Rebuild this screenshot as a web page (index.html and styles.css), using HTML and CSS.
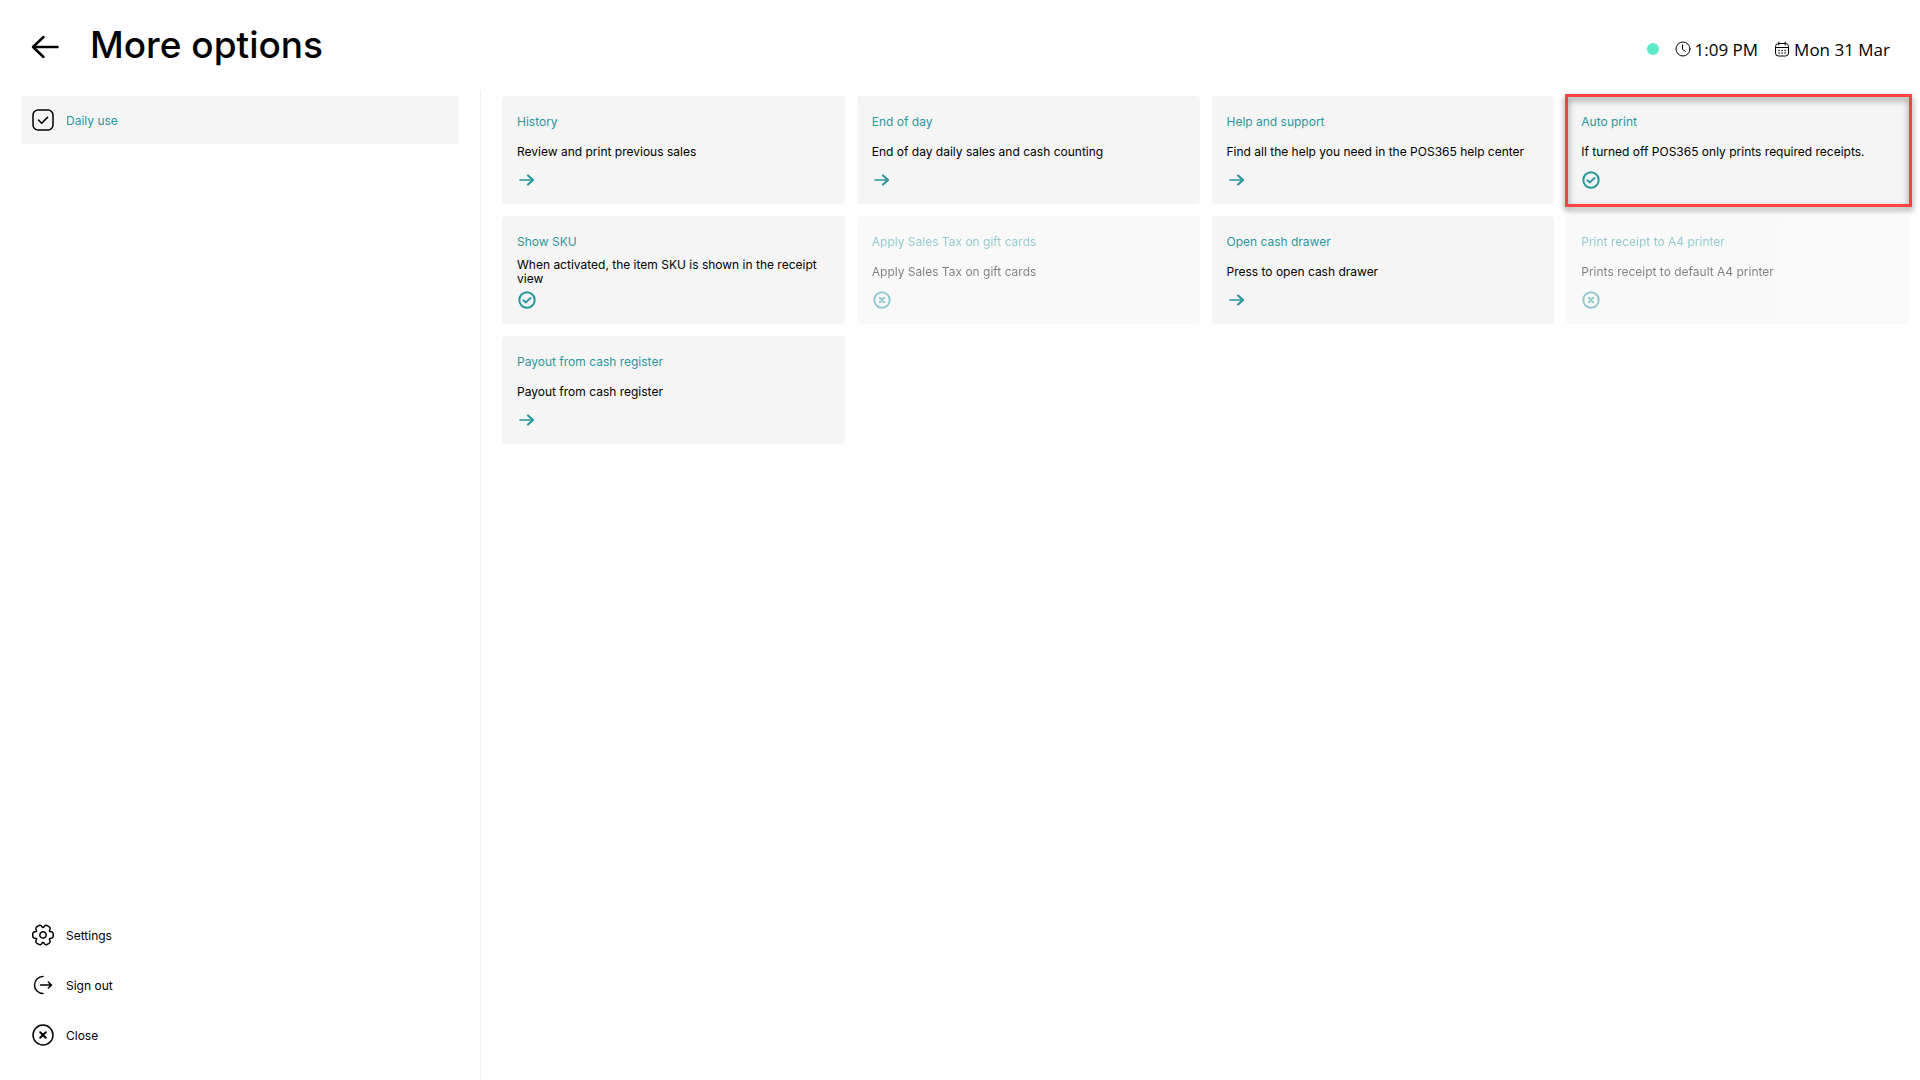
FILE: index.html
```html
<!DOCTYPE html>
<html lang="en">
  <head>
    <meta charset="UTF-8" />
    <meta name="viewport" content="width=device-width, initial-scale=1.0" />
    <title>More options</title>
    <link rel="stylesheet" href="styles.css">
  </head>
  <body>
    <!-- Shared icons -->
    <svg class="icon-defs" aria-hidden="true">
      <symbol id="icon-arrow" viewBox="0 0 18 18">
        <path d="M2 9h13" stroke-width="1.6" />
        <path d="M10 4.5L15 9l-5 4.5" stroke-width="2.2" />
      </symbol>
      <symbol id="icon-on" viewBox="0 0 18 18">
        <circle cx="9" cy="9" r="7.7" stroke-width="2" />
        <path d="M5.5 9.2l2.4 2.2 4.6-4.4" stroke-width="2" />
      </symbol>
      <symbol id="icon-off" viewBox="0 0 18 18">
        <circle cx="9" cy="9" r="7.7" stroke-width="2" />
        <path d="M6.8 6.8l4.4 4.4M11.2 6.8l-4.4 4.4" stroke-width="2.2" />
      </symbol>
      <path id="gear-tooth" d="M6.6-3.8Q7-3.1 8.1-3.2C9.7-3.3 10.3-2.2 10.3 0C10.3 2.2 9.7 3.3 8.1 3.2Q7 3.1 6.6 3.8" />
    </svg>

    <header class="header">
      <button class="back-button" aria-label="Back">
        <svg class="back-icon" viewBox="0 0 28 24">
          <path d="M26.5 12H2M12.5 2L2 12l10.5 10" />
        </svg>
      </button>
      <h1>More options</h1>
      <div class="status">
        <span class="online"></span>
        <span class="status-item">
          <svg class="status-icon" viewBox="0 0 16 16">
            <circle cx="8" cy="8" r="7" />
            <path d="M7.5 4v4.4l3 2" />
          </svg>
          1:09 PM
        </span>
        <span class="status-item">
          <svg class="status-icon" viewBox="0 0 16 16">
            <rect x="1.5" y="2.5" width="13" height="12.5" rx="3" />
            <path d="M1.5 6.5h13M4.8 1v3M11.2 1v3" />
            <path d="M5 9.5h.1M8 9.5h.1M11 9.5h.1M5 12h.1M8 12h.1M11 12h.1" stroke-width="1.5" />
          </svg>
          Mon 31 Mar
        </span>
      </div>
    </header>

    <div class="layout">
      <nav class="sidebar">
        <button class="nav-item active">
          <svg class="nav-icon" viewBox="0 0 22 22">
            <rect x="1" y="1" width="20" height="20" rx="5" />
            <path d="M6.5 11l3.2 3.2 5.8-5.8" />
          </svg>
          Daily use
        </button>
        <div class="nav-bottom">
          <button class="nav-item">
            <svg class="nav-icon" viewBox="-11 -11 22 22">
              <circle r="3.2" />
              <use href="#gear-tooth" />
              <use href="#gear-tooth" transform="rotate(60)" />
              <use href="#gear-tooth" transform="rotate(120)" />
              <use href="#gear-tooth" transform="rotate(180)" />
              <use href="#gear-tooth" transform="rotate(240)" />
              <use href="#gear-tooth" transform="rotate(300)" />
            </svg>
            Settings
          </button>
          <button class="nav-item">
            <svg class="nav-icon" viewBox="0 0 22 22">
              <path d="M11 2.5a8.5 8.5 0 0 0 0 17M8.5 11h11M16.3 8l3.2 3-3.2 3" />
            </svg>
            Sign out
          </button>
          <button class="nav-item">
            <svg class="nav-icon" viewBox="0 0 22 22">
              <circle cx="11" cy="11" r="10" />
              <path d="M8.2 8.2l5.6 5.6M13.8 8.2l-5.6 5.6" stroke-width="2" />
            </svg>
            Close
          </button>
        </div>
      </nav>

      <main class="cards">
        <button class="card">
          <span class="card-title">History</span>
          <span class="card-text">Review and print previous sales</span>
          <svg class="card-icon"><use href="#icon-arrow" /></svg>
        </button>
        <button class="card">
          <span class="card-title">End of day</span>
          <span class="card-text">End of day daily sales and cash counting</span>
          <svg class="card-icon"><use href="#icon-arrow" /></svg>
        </button>
        <button class="card">
          <span class="card-title">Help and support</span>
          <span class="card-text">Find all the help you need in the POS365 help center</span>
          <svg class="card-icon"><use href="#icon-arrow" /></svg>
        </button>
        <button class="card highlighted">
          <span class="card-title">Auto print</span>
          <span class="card-text">If turned off POS365 only prints required receipts.</span>
          <svg class="card-icon"><use href="#icon-on" /></svg>
        </button>
        <button class="card">
          <span class="card-title">Show SKU</span>
          <span class="card-text">When activated, the item SKU is shown in the receipt view</span>
          <svg class="card-icon"><use href="#icon-on" /></svg>
        </button>
        <button class="card" disabled>
          <span class="card-title">Apply Sales Tax on gift cards</span>
          <span class="card-text">Apply Sales Tax on gift cards</span>
          <svg class="card-icon"><use href="#icon-off" /></svg>
        </button>
        <button class="card">
          <span class="card-title">Open cash drawer</span>
          <span class="card-text">Press to open cash drawer</span>
          <svg class="card-icon"><use href="#icon-arrow" /></svg>
        </button>
        <button class="card" disabled>
          <span class="card-title">Print receipt to A4 printer</span>
          <span class="card-text">Prints receipt to default A4 printer</span>
          <svg class="card-icon"><use href="#icon-off" /></svg>
        </button>
        <button class="card">
          <span class="card-title">Payout from cash register</span>
          <span class="card-text">Payout from cash register</span>
          <svg class="card-icon"><use href="#icon-arrow" /></svg>
        </button>
      </main>
    </div>
  </body>
</html>
```
FILE: styles.css
```css
* {
  box-sizing: border-box;
}
body {
  margin: 0;
  min-height: 100vh;
  display: flex;
  flex-direction: column;
  background-color: white;
  color: black;
  font-family: Inter, sans-serif;
  font-size: 12px;
}
button {
  border: none;
  font: inherit;
  color: inherit;
  text-align: left;
  cursor: pointer;
}
svg {
  fill: none;
  stroke: currentColor;
  stroke-linecap: round;
  stroke-linejoin: round;
}
.icon-defs {
  position: absolute;
  width: 0;
  height: 0;
}
.header {
  display: flex;
  align-items: center;
  height: 90px;
  padding: 0 30px;
}
.back-button {
  display: flex;
  padding: 0;
  margin: 4px 31px 0 1px;
  background: none;
}
.back-icon {
  width: 28px;
  height: 24px;
  stroke-width: 2.5;
}
h1 {
  margin: 0;
  font-size: 37px;
  font-weight: 500;
  line-height: 44px;
}
.status {
  display: flex;
  align-items: center;
  gap: 16px;
  margin: 8px 0 0 auto;
  font-family: "Open Sans", sans-serif;
  font-size: 17px;
}
.online {
  width: 12px;
  height: 12px;
  border-radius: 50%;
  background-color: #5ceac8;
}
.status-item {
  display: flex;
  align-items: center;
  gap: 4px;
}
.status-icon {
  width: 16px;
  height: 16px;
}
.layout {
  display: flex;
  flex: 1;
}
.sidebar {
  display: flex;
  flex-direction: column;
  justify-content: space-between;
  width: 25%;
  padding: 6px 21px 21px;
}
.nav-bottom {
  display: flex;
  flex-direction: column;
  gap: 2px;
}
.nav-item {
  display: flex;
  align-items: center;
  gap: 12px;
  height: 48px;
  padding: 0 11px;
  background: none;
}
.nav-item.active {
  background-color: #f5f5f5;
  color: #2b979d;
}
.nav-icon {
  width: 22px;
  height: 22px;
  color: black;
  stroke-width: 1.5;
}
.cards {
  flex: 1;
  display: grid;
  grid-template-columns: repeat(4, 1fr);
  align-content: start;
  gap: 12px;
  padding: 6px 11px 12px 21px;
  border-left: 1px solid #f0f0f0;
}
.card {
  display: flex;
  flex-direction: column;
  min-height: 108px;
  padding: 18px 15px 12px;
  border-radius: 4px;
  background-color: #f5f5f5;
}
.card-title {
  line-height: 16px;
  color: #2b979d;
}
.card-text {
  display: flex;
  align-items: center;
  height: 44px;
  line-height: 14px;
}
.card-icon {
  width: 18px;
  height: 18px;
  margin: -3px 0 0 1px;
  color: #2b979d;
}
.card:disabled {
  color: black;
  opacity: 0.5;
}
.card.highlighted {
  position: relative;
  z-index: 1;
}
/* red frame lies just over the card edge */
.card.highlighted::after {
  content: "";
  position: absolute;
  inset: -2px -3px -3px -1px;
  border: 3px solid #ff4343;
  filter: drop-shadow(0 3px 3px rgba(0, 0, 0, 0.5));
}
```
